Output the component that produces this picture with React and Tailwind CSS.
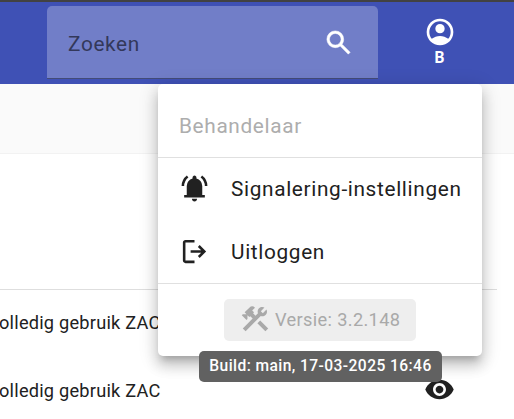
import { MdConstruction, MdVisibility } from "react-icons/md";

const paths = {
  search:
    "M784-120 532-372q-30 24-69 38t-83 14q-109 0-184.5-75.5T120-580q0-109 75.5-184.5T380-840q109 0 184.5 75.5T640-580q0 44-14 83t-38 69l252 252-56 56ZM380-400q75 0 127.5-52.5T560-580q0-75-52.5-127.5T380-760q-75 0-127.5 52.5T200-580q0 75 52.5 127.5T380-400Z",
  account:
    "M234-276q51-39 114-61.5T480-360q69 0 132 22.5T726-276q35-41 54.5-93T800-480q0-133-93.5-226.5T480-800q-133 0-226.5 93.5T160-480q0 59 19.5 111t54.5 93Zm146.5-204.5Q340-521 340-580t40.5-99.5Q421-720 480-720t99.5 40.5Q620-639 620-580t-40.5 99.5Q539-440 480-440t-99.5-40.5ZM480-80q-83 0-156-31.5T197-197q-54-54-85.5-127T80-480q0-83 31.5-156T197-763q54-54 127-85.5T480-880q83 0 156 31.5T763-763q54 54 85.5 127T880-480q0 83-31.5 156T763-197q-54 54-127 85.5T480-80Z",
  bell:
    "M80-560q0-100 44.5-183.5T244-882l47 64q-60 44-95.5 111T160-560H80Zm720 0q0-80-35.5-147T669-818l47-64q75 55 119.5 138.5T880-560h-80ZM160-200v-80h80v-280q0-83 50-147.5T420-792v-28q0-25 17.5-42.5T480-880q25 0 42.5 17.5T540-820v28q80 20 130 84.5T720-560v280h80v80H160ZM480-80q-33 0-56.5-23.5T400-160h160q0 33-23.5 56.5T480-80Z",
  logout:
    "M200-120q-33 0-56.5-23.5T120-200v-560q0-33 23.5-56.5T200-840h280v80H200v560h280v80H200Zm440-160-55-58 102-102H360v-80h327L585-622l55-58 200 200-200 200Z",
};

function Icon({ name, className }) {
  return (
    <svg viewBox="0 -960 960 960" fill="currentColor" fillRule="evenodd" className={`shrink-0 ${className}`}>
      <path d={paths[name]} />
    </svg>
  );
}

function MenuItem({ icon, className, children }) {
  return (
    <button className={`flex w-full items-center pl-[21px] text-left text-[#212121] ${className}`}>
      <Icon name={icon} className="mb-[2px] size-[31px]" />
      <span className="ml-[21px] whitespace-nowrap">{children}</span>
    </button>
  );
}

function Header() {
  return (
    <header className="flex h-[84px] border-t-2 border-[#424242] bg-[#3f51b5] pl-[47px]">
      <div className="mt-1 flex h-[73px] w-[331px] items-center justify-between rounded-t-[5px] border-b border-[#434c78] bg-[#717ec8] pl-[21px] pr-6">
        <span className="mt-[6px] text-[20.8px] tracking-[0.65px] text-[#33385a]">Zoeken</span>
        <Icon name="search" className="mt-px size-[31px] stroke-white stroke-[16] text-white" />
      </div>
      <div className="ml-[46px] flex w-8 flex-col items-center pt-[14px] text-white">
        <Icon name="account" className="size-8" />
        <span className="mr-px mt-[2px] text-[15.6px] font-bold leading-4">B</span>
      </div>
    </header>
  );
}

function UserMenu() {
  return (
    <div className="absolute left-[158px] top-[84px] h-[272px] w-[324px] rounded-[5px] bg-white pt-[10px] text-[20.8px] tracking-[0.65px] shadow-[0_7px_7px_-4px_rgba(0,0,0,0.2),0_10px_13px_1px_rgba(0,0,0,0.14),0_4px_18px_3px_rgba(0,0,0,0.12)]">
      <div className="flex h-[63px] items-center pl-[21px] pt-[2px] text-[#adadad]">Behandelaar</div>
      <div className="border-y border-[#e0e0e0]">
        <MenuItem icon="bell" className="h-[63px]">Signalering-instellingen</MenuItem>
        <MenuItem icon="logout" className="h-[62px] pt-px">Uitloggen</MenuItem>
      </div>
      <div className="flex justify-center pt-[15px]">
        <div className="flex h-[42px] w-[192px] items-center rounded-[5px] bg-[#eeeeee] pl-[15px] text-[18.2px] tracking-[0.35px] text-[#a9a9a9]">
          <MdConstruction className="mb-[3px] size-8 shrink-0" />
          <span className="ml-1 whitespace-nowrap">Versie: 3.2.148</span>
        </div>
      </div>
    </div>
  );
}

export default function App() {
  return (
    <div className="relative h-[419px] w-[514px] overflow-hidden bg-white font-[Roboto,sans-serif] text-[#212121]">
      <Header />
      <div className="h-[70px] border-b border-[#f2f2f2] bg-[#fafafa]" />
      <main className="mr-[17px] pt-[135px] text-[18.2px] tracking-[0.22px]">
        <div className="flex h-[66px] items-center border-t border-[#dedede]">
          <span className="-ml-px whitespace-nowrap">olledig gebruik ZAC</span>
        </div>
        <div className="flex h-[72px] items-center justify-between pr-[42px]">
          <span className="-ml-px whitespace-nowrap">olledig gebruik ZAC</span>
          <MdVisibility className="mb-[3px] size-[31px]" />
        </div>
      </main>
      <UserMenu />
      <div className="absolute left-[199px] top-[351px] flex h-[31px] w-[243px] items-center justify-center whitespace-nowrap rounded-[5px] bg-[#616161] pt-px text-[15.6px] font-medium tracking-[0.42px] text-white">
        Build: main, 17-03-2025 16:46
      </div>
    </div>
  );
}
